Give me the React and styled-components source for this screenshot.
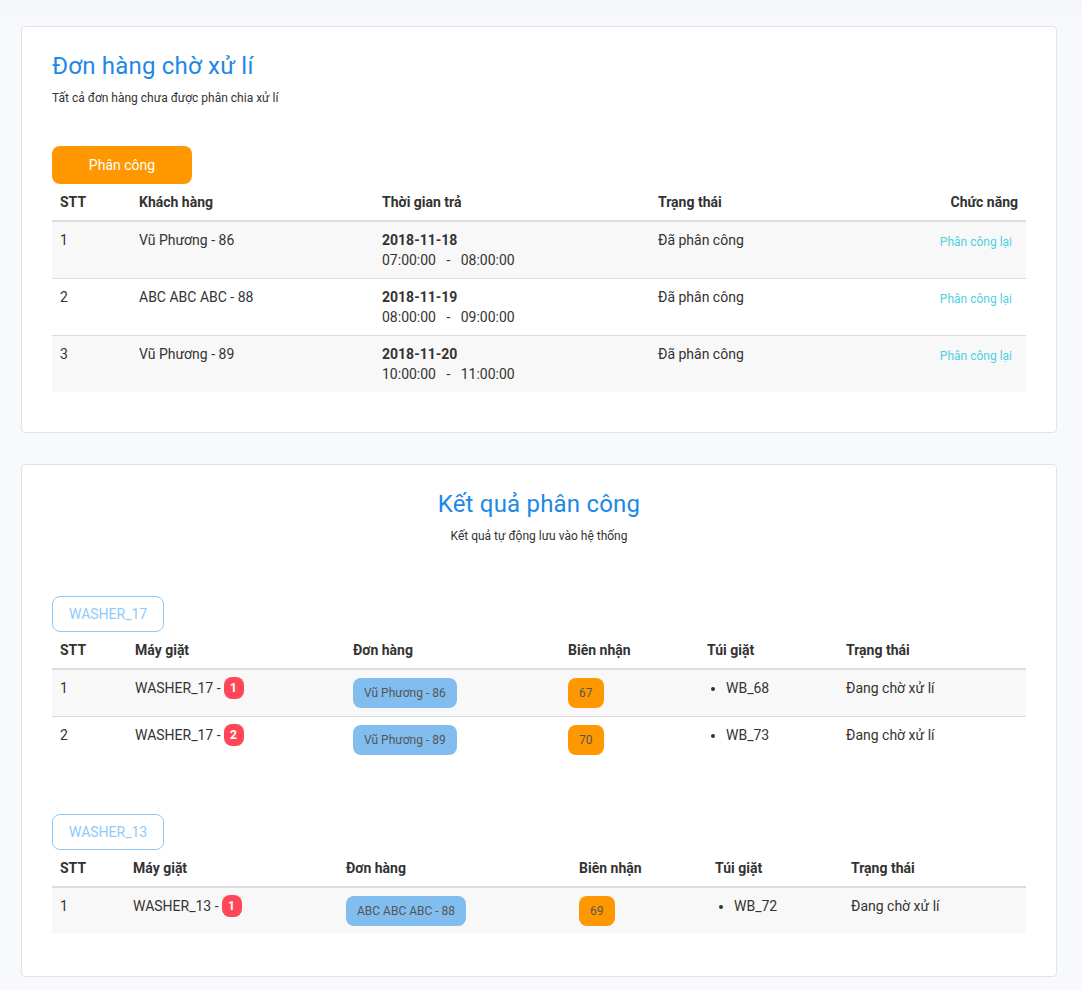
import React from "react";
import styled, { createGlobalStyle } from "styled-components";

const GlobalStyle = createGlobalStyle`
  body {
    margin: 0;
    background: #f8f9fc;
    font-family: Roboto, "Noto Sans", sans-serif;
    color: #333;
  }
`;

const Page = styled.div`
  display: flex;
  flex-direction: column;
  gap: 31px;
  padding: 26px 25px 13px 21px;
  background: linear-gradient(#f4f6fa, #f8f9fc 30px);
`;

const Card = styled.section`
  background: #fff;
  border: 1px solid #e3e3e3;
  border-radius: 4px;
  padding: 24px 30px ${(p) => p.$bottom || 40}px;
`;

const Title = styled.h2`
  margin: 0;
  font-size: 24px;
  line-height: 30px;
  font-weight: 400;
  letter-spacing: 0.2px;
  color: #1e88e5;
  text-align: ${(p) => (p.$center ? "center" : "left")};
`;

const Subtitle = styled.p`
  margin: 9px 0 0;
  font-size: 12px;
  line-height: 16px;
  color: #333;
  text-align: ${(p) => (p.$center ? "center" : "left")};
`;

const Section = styled.div`
  margin-top: ${(p) => p.$top}px;
`;

const AssignButton = styled.button`
  width: 140px;
  height: 38px;
  border: none;
  border-radius: 8px;
  background: #ff9800;
  color: #fff;
  font-family: inherit;
  font-size: 14px;
`;

const WasherButton = styled.button`
  height: 36px;
  padding: 0 16px;
  border: 1px solid #90caf9;
  border-radius: 8px;
  background: #fff;
  color: #90caf9;
  font-family: inherit;
  font-size: 14px;
`;

const Table = styled.table`
  width: 100%;
  border-collapse: collapse;
  table-layout: fixed;
  font-size: 14px;
  line-height: 20px;
`;

const Th = styled.th`
  padding: 8px;
  font-weight: 700;
  color: #333;
  text-align: ${(p) => p.$align || "left"};
  border-bottom: 2px solid #dcdcdc;
`;

const Tr = styled.tr`
  background: ${(p) => (p.$odd ? "#f8f8f8" : "#fff")};
  border-top: 1px solid #dcdcdc;

  &:first-child {
    border-top: none;
  }
`;

const Td = styled.td`
  padding: 8px;
  vertical-align: top;
  color: #333;
  text-align: ${(p) => p.$align || "left"};
`;

const Date = styled.div`
  font-weight: 700;
`;

const LinkButton = styled.button`
  margin-top: 2px;
  padding: 2px 6px;
  border: none;
  background: transparent;
  color: #4dd0e1;
  font-family: inherit;
  font-size: 12px;
  line-height: 16px;
`;

const Badge = styled.span`
  display: inline-flex;
  align-items: center;
  justify-content: center;
  min-width: 20px;
  height: 22px;
  margin-left: 3px;
  border-radius: 8px;
  background: #ff4757;
  color: #fff;
  font-size: 12px;
  font-weight: 700;
  vertical-align: middle;
  position: relative;
  top: -1px;
`;

const Pill = styled.span`
  display: inline-block;
  padding: 6px ${(p) => p.$pad}px;
  border-radius: 8px;
  background: ${(p) => p.$bg};
  color: #555;
  font-size: 12px;
  line-height: 18px;
  vertical-align: top;
`;

const BagList = styled.ul`
  margin: 0;
  padding-left: 19px;
`;

const orders = [
  { id: 1, name: "Vũ Phương - 86", date: "2018-11-18", from: "07:00:00", to: "08:00:00" },
  { id: 2, name: "ABC ABC ABC - 88", date: "2018-11-19", from: "08:00:00", to: "09:00:00" },
  { id: 3, name: "Vũ Phương - 89", date: "2018-11-20", from: "10:00:00", to: "11:00:00" },
];

const washers = [
  {
    name: "WASHER_17",
    top: 52,
    cols: [75, 218, 215, 139, 139, 188],
    rows: [
      { order: "Vũ Phương - 86", receipt: "67", bag: "WB_68" },
      { order: "Vũ Phương - 89", receipt: "70", bag: "WB_73" },
    ],
  },
  {
    name: "WASHER_13",
    top: 51,
    cols: [73, 213, 233, 136, 136, 183],
    rows: [{ order: "ABC ABC ABC - 88", receipt: "69", bag: "WB_72" }],
  },
];

const App = () => {
  return (
    <Page>
      <GlobalStyle />
      <Card>
        <Title>Đơn hàng chờ xử lí</Title>
        <Subtitle>Tất cả đơn hàng chưa được phân chia xử lí</Subtitle>
        <Section $top={40}>
          <AssignButton>Phân công</AssignButton>
          <Table>
            <colgroup>
              <col style={{ width: 79 }} />
              <col style={{ width: 243 }} />
              <col style={{ width: 276 }} />
              <col style={{ width: 220 }} />
              <col />
            </colgroup>
            <thead>
              <tr>
                <Th>STT</Th>
                <Th>Khách hàng</Th>
                <Th>Thời gian trả</Th>
                <Th>Trạng thái</Th>
                <Th $align="right">Chức năng</Th>
              </tr>
            </thead>
            <tbody>
              {orders.map((o, i) => (
                <Tr key={o.id} $odd={i % 2 === 0}>
                  <Td>{o.id}</Td>
                  <Td>{o.name}</Td>
                  <Td>
                    <Date>{o.date}</Date>
                    <div>
                      {o.from}&nbsp;&nbsp; - &nbsp;&nbsp;{o.to}
                    </div>
                  </Td>
                  <Td>Đã phân công</Td>
                  <Td $align="right">
                    <LinkButton>Phân công lại</LinkButton>
                  </Td>
                </Tr>
              ))}
            </tbody>
          </Table>
        </Section>
      </Card>

      <Card $bottom={42}>
        <Title $center>Kết quả phân công</Title>
        <Subtitle $center>Kết quả tự động lưu vào hệ thống</Subtitle>
        {washers.map((w) => (
          <Section key={w.name} $top={w.top}>
            <WasherButton>{w.name}</WasherButton>
            <Table>
              <colgroup>
                {w.cols.map((c, i) => (
                  <col key={i} style={{ width: c }} />
                ))}
              </colgroup>
              <thead>
                <tr>
                  <Th>STT</Th>
                  <Th>Máy giặt</Th>
                  <Th>Đơn hàng</Th>
                  <Th>Biên nhận</Th>
                  <Th>Túi giặt</Th>
                  <Th>Trạng thái</Th>
                </tr>
              </thead>
              <tbody>
                {w.rows.map((r, i) => (
                  <Tr key={i} $odd={i % 2 === 0}>
                    <Td>{i + 1}</Td>
                    <Td>
                      {w.name} -<Badge>{i + 1}</Badge>
                    </Td>
                    <Td>
                      <Pill $bg="#82bdf0" $pad={11}>{r.order}</Pill>
                    </Td>
                    <Td>
                      <Pill $bg="#ff9800" $pad={11}>{r.receipt}</Pill>
                    </Td>
                    <Td>
                      <BagList>
                        <li>{r.bag}</li>
                      </BagList>
                    </Td>
                    <Td>Đang chờ xử lí</Td>
                  </Tr>
                ))}
              </tbody>
            </Table>
          </Section>
        ))}
      </Card>
    </Page>
  );
};

export default App;
